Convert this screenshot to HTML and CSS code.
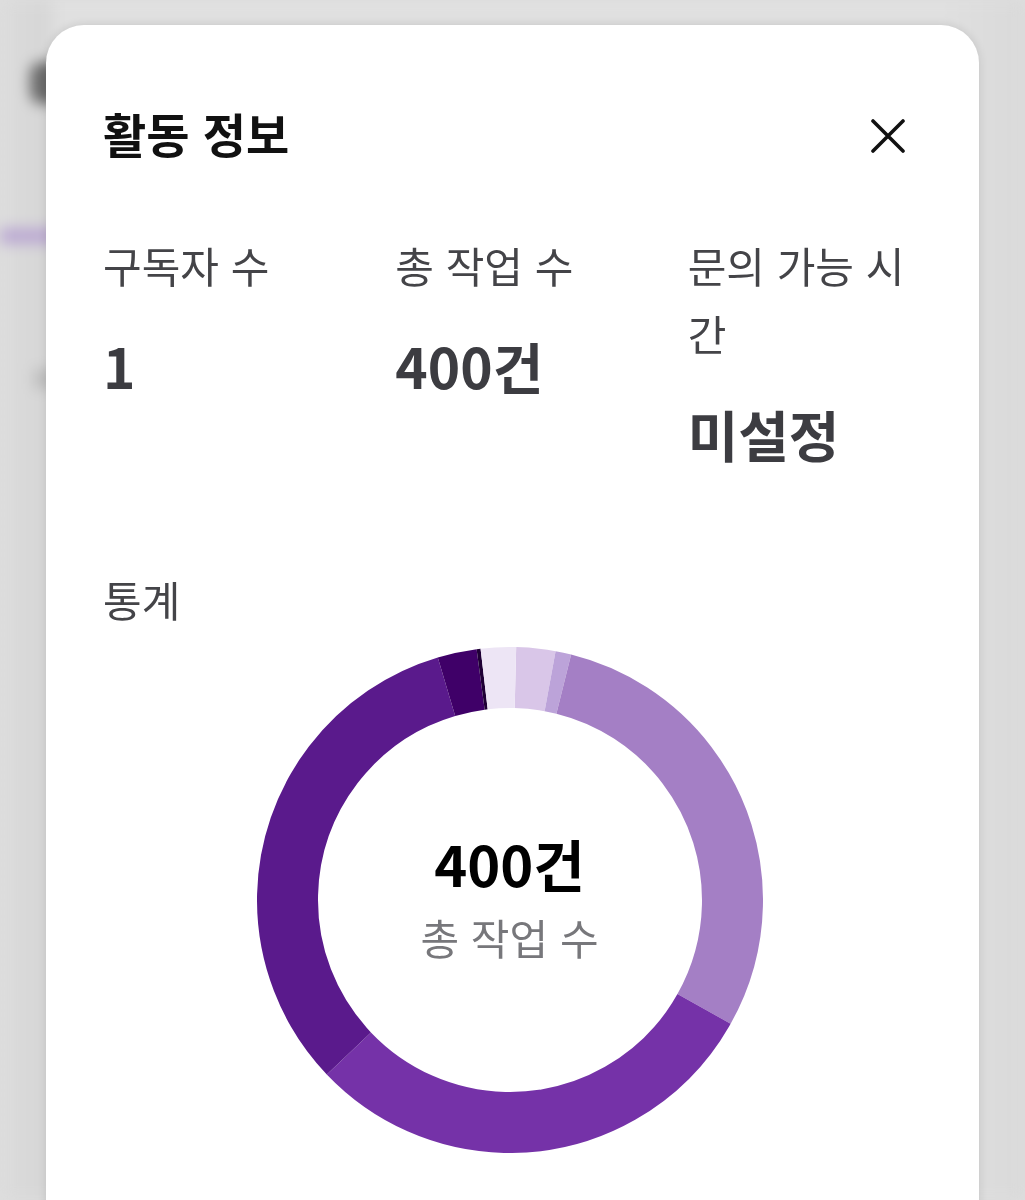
FILE: index.html
```html
<!DOCTYPE html>
<html lang="ko">
<head>
<meta charset="utf-8">
<title>활동 정보</title>
<link rel="stylesheet" href="styles.css">
</head>
<body>
<div class="backdrop" aria-hidden="true">
  <div class="bd-icon"></div>
  <div class="bd-tab"></div>
  <div class="bd-row"></div>
</div>
<section class="sheet">
  <header class="sheet-head">
    <h1 class="sheet-title">활동 정보</h1>
    <button class="close" aria-label="닫기">
      <svg viewBox="0 0 34 34" width="34" height="34"><path d="M2 2 L32 32 M32 2 L2 32" fill="none" stroke="#111" stroke-width="3.6" stroke-linecap="round"/></svg>
    </button>
  </header>
  <div class="stats">
    <div class="stat"><div class="label">구독자 수</div><div class="value">1</div></div>
    <div class="stat"><div class="label">총 작업 수</div><div class="value">400건</div></div>
    <div class="stat"><div class="label">문의 가능 시간</div><div class="value">미설정</div></div>
  </div>
  <h2 class="section-title">통계</h2>
  <div class="chart">
    <svg class="donut" viewBox="0 0 506 506" width="506" height="506">
      <g transform="rotate(-88.6 253 253)" fill="none" stroke-width="61">
        <circle cx="253" cy="253" r="222.5" pathLength="400" stroke="#d9c6e8" stroke-dasharray="10 390" stroke-dashoffset="0"/>
        <circle cx="253" cy="253" r="222.5" pathLength="400" stroke="#bca3d9" stroke-dasharray="4 396" stroke-dashoffset="-10"/>
        <circle cx="253" cy="253" r="222.5" pathLength="400" stroke="#a47fc5" stroke-dasharray="117 283" stroke-dashoffset="-14"/>
        <circle cx="253" cy="253" r="222.5" pathLength="400" stroke="#7532a8" stroke-dasharray="119 281" stroke-dashoffset="-131"/>
        <circle cx="253" cy="253" r="222.5" pathLength="400" stroke="#5a1a8c" stroke-dasharray="130 270" stroke-dashoffset="-250"/>
        <circle cx="253" cy="253" r="222.5" pathLength="400" stroke="#3f0068" stroke-dasharray="10 390" stroke-dashoffset="-380"/>
        <circle cx="253" cy="253" r="222.5" pathLength="400" stroke="#1f0035" stroke-dasharray="1 399" stroke-dashoffset="-390"/>
        <circle cx="253" cy="253" r="222.5" pathLength="400" stroke="#ede5f5" stroke-dasharray="9 391" stroke-dashoffset="-391"/>
      </g>
    </svg>
    <div class="chart-center">
      <div class="total">400건</div>
      <div class="caption">총 작업 수</div>
    </div>
  </div>
</section>
</body>
</html>
```
FILE: styles.css
```css
html, body {
  margin: 0;
  padding: 0;
}
body {
  background: #dedede;
  font-family: "Noto Sans CJK KR", "Noto Sans", sans-serif;
  overflow: hidden;
}
.backdrop {
  position: fixed;
  inset: 0;
  z-index: 0;
  display: flex;
  flex-direction: column;
  padding-top: 62px;
  filter: blur(7px);
  background: linear-gradient(90deg, #dcdcdc 0, #d6d6d6 44px, #e0e0e0 60px, #e0e0e0 940px, #d9d9d9 1025px);
}
.bd-icon {
  width: 40px;
  height: 42px;
  margin-left: 30px;
  background: #6a6a6a;
  border-radius: 12px;
}
.bd-tab {
  margin-top: 124px;
  width: 120px;
  height: 16px;
  background: #bba9d2;
}
.bd-row {
  margin-top: 125px;
  margin-left: 34px;
  width: 30px;
  height: 20px;
  background: #bdbdbd;
}
.sheet {
  position: relative;
  z-index: 1;
  margin: 25px 46px 0;
  background: #fff;
  border-radius: 38px 38px 0 0;
  padding: 78px 57px 80px;
  box-shadow: 0 0 10px rgba(0, 0, 0, 0.12);
}
.sheet-head {
  display: flex;
  justify-content: space-between;
  align-items: center;
  height: 60px;
}
.sheet-title {
  margin: 0;
  font-size: 47px;
  line-height: 60px;
  font-weight: 700;
  color: #111;
}
.close {
  border: 0;
  background: none;
  padding: 0;
  margin-right: 17px;
  margin-top: 6px;
  width: 34px;
  height: 34px;
  display: flex;
}
.stats {
  display: grid;
  grid-template-columns: repeat(3, 1fr);
  column-gap: 58px;
  margin-top: 68px;
}
.label {
  font-size: 42px;
  line-height: 68px;
  color: #444448;
}
.value {
  margin-top: 31px;
  font-size: 55px;
  line-height: 70px;
  font-weight: 700;
  color: #3c3c41;
}
.section-title {
  margin: 97px 0 0;
  font-size: 42px;
  line-height: 68px;
  font-weight: 400;
  color: #444448;
}
.chart {
  margin-top: 14px;
  display: grid;
  justify-items: center;
  align-items: center;
}
.donut, .chart-center {
  grid-area: 1 / 1;
}
.donut {
  display: block;
  margin-left: -6px;
}
.chart-center {
  display: flex;
  flex-direction: column;
  align-items: center;
  gap: 14px;
  margin-left: -6px;
}
.total {
  font-size: 56px;
  line-height: 60px;
  font-weight: 700;
  color: #000;
}
.caption {
  font-size: 42px;
  line-height: 60px;
  color: #77777b;
}
```
